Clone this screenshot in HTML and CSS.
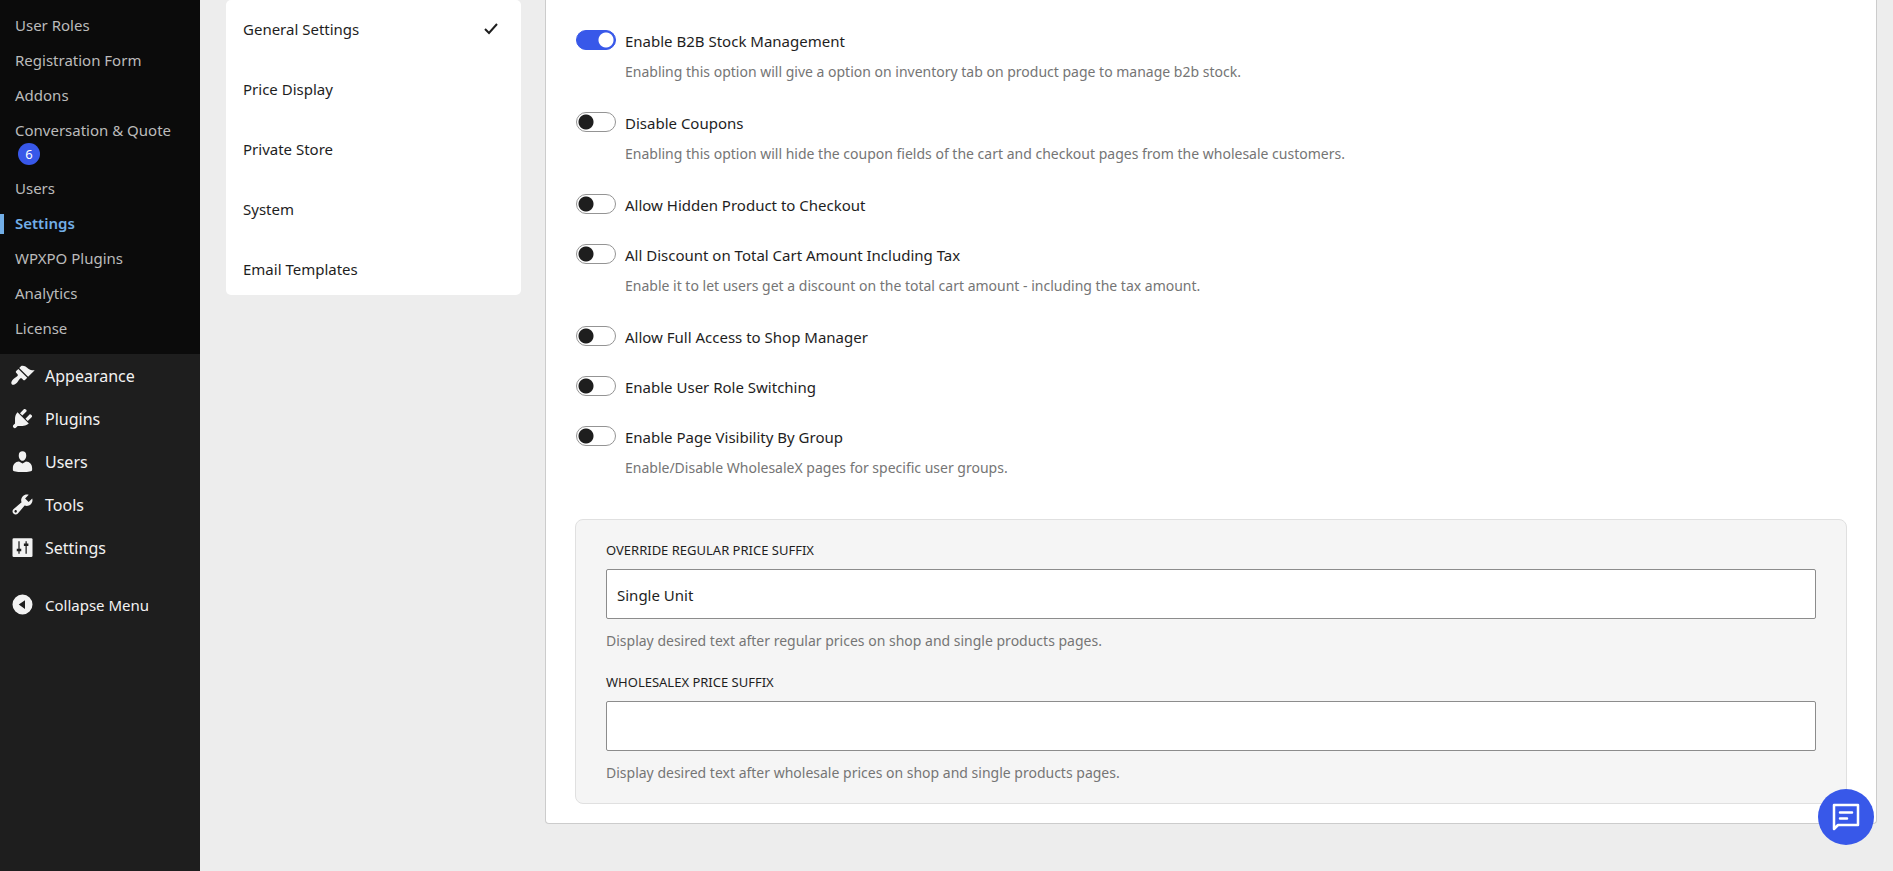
FILE: index.html
```html
<!DOCTYPE html>
<html lang="en">
<head>
<meta charset="utf-8">
<title>General Settings</title>
<link rel="stylesheet" href="styles.css">
</head>
<body>
<div class="layout">
  <nav class="sidebar" aria-label="Admin menu">
    <ul class="submenu">
      <li><a href="#">User Roles</a></li>
      <li><a href="#">Registration Form</a></li>
      <li><a href="#">Addons</a></li>
      <li><a href="#">Conversation &amp; Quote <span class="count">6</span></a></li>
      <li><a href="#">Users</a></li>
      <li><a href="#" class="current" aria-current="page">Settings</a></li>
      <li><a href="#">WPXPO Plugins</a></li>
      <li><a href="#">Analytics</a></li>
      <li><a href="#">License</a></li>
    </ul>
    <ul class="menu">
      <li><a href="#"><svg viewBox="0 0 20 20"><path d="M14.48 11.06L7.41 3.99l1.5-1.5c.5-.56 2.3-.47 3.51.32 1.21.8 1.43 1.28 2.91 2.1 1.18.64 2.45 1.26 4.45.85zm-.71.71L6.7 4.7 4.93 6.47c-.39.39-.39 1.02 0 1.41l1.06 1.06c.39.39.39 1.03 0 1.42-.6.6-1.43 1.11-2.21 1.69-.35.26-.7.53-1.01.84C1.43 14.23.4 16.08 1.4 17.07c.99 1 2.84-.03 4.18-1.36.31-.31.58-.66.85-1.02.57-.78 1.08-1.61 1.69-2.21.39-.39 1.02-.39 1.41 0l1.06 1.06c.39.39 1.02.39 1.41 0z"/></svg>Appearance</a></li>
      <li><a href="#"><svg viewBox="0 0 20 20"><path d="M13.11 4.36L9.87 7.6 8 5.73l3.24-3.24c.35-.34 1.05-.2 1.56.32.52.51.66 1.21.31 1.55zm-8 1.77l.91-1.12 9.01 9.01-1.19.84c-.71.71-2.63 1.16-3.82 1.16H6.14L4.9 17.26c-.59.59-1.54.59-2.12 0-.59-.58-.59-1.53 0-2.12l1.24-1.24v-3.88c0-1.13.4-3.19 1.09-3.89zm7.26 3.97l3.24-3.24c.34-.35 1.04-.21 1.55.31.52.51.66 1.21.31 1.55l-3.24 3.25z"/></svg>Plugins</a></li>
      <li><a href="#"><svg viewBox="0 0 20 20"><path d="M10 9.300c-1.900 0-3-2.100-3-4.200C7 3 8.200 1.800 10 1.800S13 3 13 5.100c0 2.100-1.100 4.200-3 4.200z"/><path d="M7.200 9.900L10 11.600l2.800-1.700c3 .2 4.900 2.300 4.900 5.200v1.400c0 .6-.4 1-1 1.200-4.200.9-9.200.9-13.400 0-.6-.2-1-.6-1-1.200v-1.400c0-2.900 1.900-5 4.900-5.200z"/></svg>Users</a></li>
      <li><a href="#"><svg viewBox="0 0 20 20"><path d="M16.68 9.77c-1.34 1.34-3.3 1.67-4.95.99l-5.41 6.52c-.99.99-2.59.99-3.58 0s-.99-2.59 0-3.57l6.52-5.42c-.68-1.65-.35-3.61.99-4.95 1.28-1.28 3.12-1.62 4.72-1.06l-2.89 2.89 2.82 2.82 2.86-2.87c.53 1.58.18 3.39-1.08 4.65zM3.81 16.21c.4.39 1.04.39 1.43 0 .4-.4.4-1.04 0-1.43-.39-.4-1.03-.4-1.43 0-.39.39-.39 1.03 0 1.43z"/></svg>Tools</a></li>
      <li><a href="#"><svg viewBox="0 0 20 20"><rect x="2" y="2.500" width="16" height="15" rx="1"/><path class="cut" d="M7.200 5v10M12.900 5v10"/><path class="cut bar" d="M5.400 12h3.600M11.100 7.700h3.600"/></svg>Settings</a></li>
    </ul>
    <button type="button" class="collapse"><svg viewBox="0 0 20 20"><path fill-rule="evenodd" d="M10 2a8 8 0 1 0 0 16 8 8 0 0 0 0-16zm2 4.500v7l-5-3.500z"/></svg>Collapse Menu</button>
  </nav>

  <main class="content">
    <nav class="tabs" aria-label="Settings sections">
      <a href="#" aria-current="page">General Settings
        <svg class="tick" viewBox="0 0 16 16"><path d="M2 8l4 4L14 3"/></svg></a>
      <a href="#">Price Display</a>
      <a href="#">Private Store</a>
      <a href="#">System</a>
      <a href="#">Email Templates</a>
    </nav>

    <form class="panel">
      <div class="options">
        <div class="option">
          <input type="checkbox" role="switch" id="stock" checked>
          <div><label for="stock">Enable B2B Stock Management</label>
          <p class="hint">Enabling this option will give a option on inventory tab on product page to manage b2b stock.</p></div>
        </div>
        <div class="option">
          <input type="checkbox" role="switch" id="coupons">
          <div><label for="coupons">Disable Coupons</label>
          <p class="hint">Enabling this option will hide the coupon fields of the cart and checkout pages from the wholesale customers.</p></div>
        </div>
        <div class="option">
          <input type="checkbox" role="switch" id="hidden-product">
          <label for="hidden-product">Allow Hidden Product to Checkout</label>
        </div>
        <div class="option">
          <input type="checkbox" role="switch" id="discount">
          <div><label for="discount">All Discount on Total Cart Amount Including Tax</label>
          <p class="hint">Enable it to let users get a discount on the total cart amount - including the tax amount.</p></div>
        </div>
        <div class="option">
          <input type="checkbox" role="switch" id="shop-manager">
          <label for="shop-manager">Allow Full Access to Shop Manager</label>
        </div>
        <div class="option">
          <input type="checkbox" role="switch" id="role-switching">
          <label for="role-switching">Enable User Role Switching</label>
        </div>
        <div class="option">
          <input type="checkbox" role="switch" id="visibility">
          <div><label for="visibility">Enable Page Visibility By Group</label>
          <p class="hint">Enable/Disable WholesaleX pages for specific user groups.</p></div>
        </div>
      </div>

      <div class="fields">
        <div class="field">
          <label for="regular-suffix">Override Regular Price Suffix</label>
          <input type="text" id="regular-suffix" value="Single Unit">
          <p class="hint">Display desired text after regular prices on shop and single products pages.</p>
        </div>
        <div class="field">
          <label for="wholesale-suffix">WholesaleX Price Suffix</label>
          <input type="text" id="wholesale-suffix">
          <p class="hint">Display desired text after wholesale prices on shop and single products pages.</p>
        </div>
      </div>
    </form>
  </main>
</div>
<button type="button" class="chat" aria-label="Open chat"><svg viewBox="0 0 28 28"><path d="M2 26V2h24v20H6z"/><path d="M8 9.500h12M8 15.500h7"/></svg></button>
</body>
</html>
```
FILE: styles.css
```css
* {
  box-sizing: border-box;
}

body {
  margin: 0;
  background: #ededed;
  color: #1e1e1e;
  font: 15px/22px "Noto Sans", "Open Sans", sans-serif;
}

ul {
  list-style: none;
  margin: 0;
  padding: 0;
}

p {
  margin: 0;
}

a {
  color: inherit;
  text-decoration: none;
}

.layout {
  display: flex;
  min-height: 100vh;
}

/* Sidebar */

.sidebar {
  flex: none;
  width: 200px;
  background: #1e1e1e;
  color: #f2f2f2;
}

.submenu {
  padding: 8px 0;
  background: #0b0b0b;
  color: #bbb;
}

.submenu a {
  display: block;
  padding: 6px 15px;
  line-height: 23px;
}

.submenu .current {
  color: #72aee6;
  font-weight: 600;
  background: linear-gradient(#72aee6, #72aee6) left center / 4px 20px no-repeat;
}

.count {
  display: inline-block;
  width: 22px;
  margin-left: 3px;
  border-radius: 11px;
  background: #3858e9;
  color: #fff;
  font-size: 13px;
  line-height: 22px;
  text-align: center;
}

.menu a,
.collapse {
  display: flex;
  align-items: center;
  gap: 10px;
  height: 43px;
  padding: 0 10px;
}

.menu a {
  font-size: 16px;
}

.menu svg,
.collapse svg {
  width: 25px;
  height: 25px;
  fill: #f2f2f2;
}

.menu .cut {
  fill: none;
  stroke: #1e1e1e;
}

.menu .bar {
  stroke-width: 2;
}

.collapse {
  width: 100%;
  margin-top: 14px;
  border: 0;
  background: none;
  color: inherit;
  font: inherit;
}

/* Page content */

.content {
  flex: 1;
  display: flex;
  align-items: flex-start;
  gap: 24px;
  padding: 0 16px 48px 26px;
}

.tabs {
  flex: none;
  display: flex;
  flex-direction: column;
  gap: 40px;
  width: 295px;
  padding: 19px 17px 16px;
  border-radius: 5px;
  background: #fff;
}

.tabs a {
  display: flex;
  align-items: center;
  justify-content: space-between;
  line-height: 20px;
}

.tick {
  width: 16px;
  height: 16px;
  margin-right: 5px;
  fill: none;
  stroke: #1e1e1e;
  stroke-width: 2;
}

.panel {
  flex: 1;
  padding: 30px 29px 19px;
  border: 1px solid #ccc;
  border-top: 0;
  border-radius: 0 0 4px 4px;
  background: #fff;
}

.options {
  display: flex;
  flex-direction: column;
  gap: 28px;
  padding-left: 1px;
}

.option {
  display: flex;
  align-items: flex-start;
  gap: 9px;
}

.option label {
  display: block;
}

.hint {
  color: #757575;
  font-size: 14px;
}

.option .hint {
  padding: 9px 0 1px;
}

[role="switch"] {
  appearance: none;
  flex: none;
  width: 40px;
  height: 20px;
  margin: 0;
  border: 1px solid #949494;
  border-radius: 10px;
  background: radial-gradient(circle at 9px 9px, #1e1e1e 7px, transparent 8px) #fff;
}

[role="switch"]:checked {
  border-color: #3858e9;
  background: radial-gradient(circle at 29px 9px, #fff 7px, transparent 8px) #3858e9;
}

.fields {
  display: flex;
  flex-direction: column;
  gap: 19px;
  margin-top: 39px;
  padding: 19px 30px;
  border: 1px solid #e0e0e0;
  border-radius: 8px;
  background: #f5f5f5;
}

.field {
  display: flex;
  flex-direction: column;
}

.field label {
  margin-bottom: 8px;
  font-size: 13px;
  text-transform: uppercase;
}

.field input {
  height: 50px;
  margin-bottom: 11px;
  padding: 2px 10px 0;
  border: 1px solid #8c8c8c;
  border-radius: 2px;
  background: #fff;
  color: inherit;
  font: inherit;
}

/* Chat launcher */

.chat {
  position: fixed;
  right: 19px;
  bottom: 26px;
  display: grid;
  place-items: center;
  width: 56px;
  height: 56px;
  padding: 0;
  border: 0;
  border-radius: 50%;
  background: #3858e9;
}

.chat svg {
  width: 28px;
  height: 28px;
  fill: none;
  stroke: #fff;
  stroke-width: 2.500;
  stroke-linecap: round;
  stroke-linejoin: round;
}
```
